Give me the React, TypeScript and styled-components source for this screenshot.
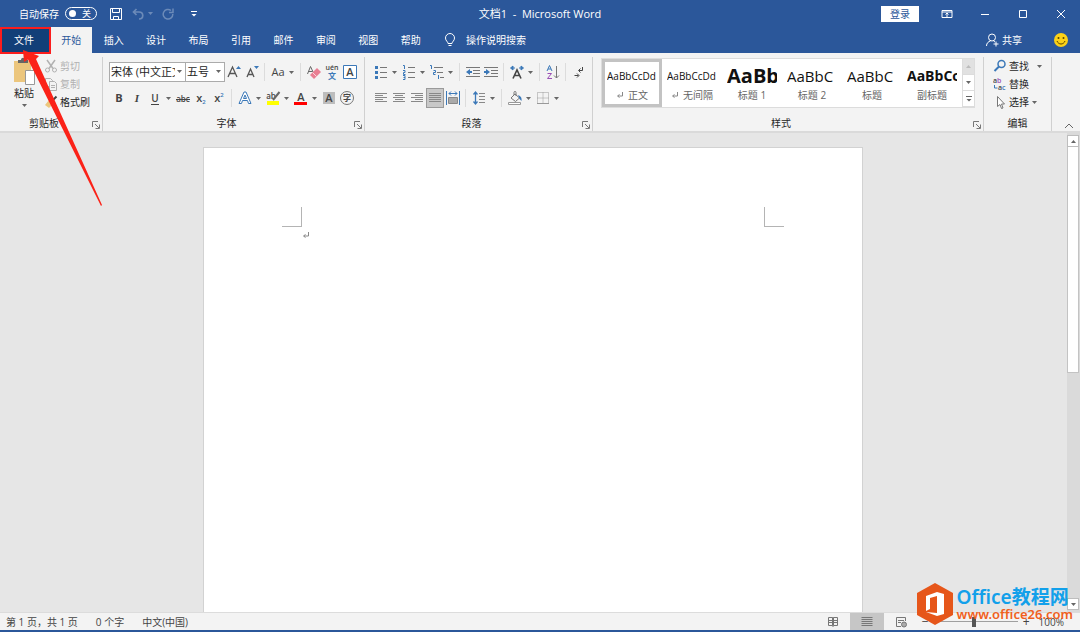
import React from "react";
import styled, { createGlobalStyle, css } from "styled-components";

const blue = "#2b579a";
const ink = "#444444";
const accent = "#3b78b8";

const GlobalStyle = createGlobalStyle`
  *, *::before, *::after { box-sizing: border-box; }
  body {
    margin: 0;
    font-family: "Open Sans", "Noto Sans CJK SC", sans-serif;
    font-size: 10px;
    line-height: 14px;
    color: #262626;
    background: #e6e6e6;
  }
  button, input, select { font: inherit; color: inherit; }
  button { border: 0; padding: 0; background: none; white-space: nowrap; }
  svg { display: block; flex: none; }
`;

const Window = styled.div`
  position: relative;
  display: flex;
  flex-direction: column;
  min-height: 100vh;
`;

/* ---------- title bar ---------- */

const TitleBar = styled.header`
  display: grid;
  grid-template-columns: 1fr auto 1fr;
  align-items: center;
  height: 27px;
  background: ${blue};
  color: #fff;
`;

const QuickAccess = styled.div`
  display: flex;
  align-items: center;
  padding-left: 19px;
`;

const AutoSave = styled.label`
  display: flex;
  align-items: center;
  gap: 6px;
  margin-right: 6px;
`;

const SwitchBox = styled.span`
  position: relative;
  display: flex;
  align-items: center;
  justify-content: space-between;
  width: 32px;
  height: 13px;
  padding: 0 5px 0 3px;
  border: 1px solid #fff;
  border-radius: 7px;
  line-height: 10px;
`;

const SwitchInput = styled.input`
  position: absolute;
  inset: 0;
  margin: 0;
  opacity: 0;
`;

const Knob = styled.span`
  width: 7px;
  height: 7px;
  border-radius: 50%;
  background: #fff;
`;

const SwitchState = styled.span`
  font-size: 9px;
`;

const QuickButton = styled.button<{ $dim?: boolean }>`
  display: flex;
  align-items: center;
  justify-content: center;
  width: 26px;
  height: 20px;
  gap: 4px;
  opacity: ${(p) => (p.$dim ? 0.3 : 1)};
`;

const WindowTitle = styled.h1`
  margin: 0;
  font-size: 11px;
  font-weight: 400;
  white-space: pre;
`;

const WindowControls = styled.div`
  display: flex;
  align-items: center;
  justify-content: flex-end;
`;

const SignIn = styled.button`
  width: 38px;
  height: 16px;
  margin-right: 9px;
  background: #fff;
  color: ${blue};
`;

const WindowButton = styled.button`
  display: flex;
  align-items: center;
  justify-content: center;
  width: 38px;
  height: 26px;
`;

/* ---------- tabs ---------- */

const TabBar = styled.nav`
  display: flex;
  height: 26px;
  background: ${blue};
  color: #fff;
`;

const FileTab = styled.button`
  width: 50px;
  padding-right: 2px;
  background: #123f78;
`;

const TabList = styled.div`
  display: grid;
  grid-template-columns: repeat(9, 1fr);
  width: 382px;
`;

const Tab = styled.button<{ $active?: boolean }>`
  ${(p) =>
    p.$active &&
    css`
      background: #f3f3f3;
      color: ${blue};
    `}
`;

const TellMe = styled.label`
  display: flex;
  align-items: center;
  flex: 1;
  gap: 10px;
  padding-left: 12px;
`;

const TellMeInput = styled.input`
  width: 120px;
  padding: 0;
  border: 0;
  outline: 0;
  background: none;
  &::placeholder { color: #fff; opacity: 1; }
`;

const TabActions = styled.div`
  display: flex;
  align-items: center;
  gap: 32px;
  padding-right: 12px;
`;

const ShareButton = styled.button`
  display: flex;
  align-items: center;
  gap: 3px;
`;

/* ---------- ribbon ---------- */

const Ribbon = styled.section`
  display: flex;
  height: 80px;
  padding-top: 4px;
  background: #f3f3f3;
  border-bottom: 2px solid #dadada;
`;

const Group = styled.div<{ $width?: number; $pad?: number }>`
  display: flex;
  flex-direction: column;
  justify-content: space-between;
  ${(p) => (p.$width ? `width: ${p.$width}px; flex: none;` : "flex: 1; min-width: 0;")}
  height: 74px;
  padding-left: ${(p) => p.$pad ?? 0}px;
  border-right: 1px solid #d0d0d0;
`;

const GroupFooter = styled.div<{ $pull?: number }>`
  display: flex;
  align-items: center;
  height: 16px;
  margin-left: -${(p) => p.$pull ?? 0}px;
`;

const GroupName = styled.span`
  flex: 1;
  text-align: center;
`;

const Launcher = styled.button`
  width: 14px;
  height: 12px;
  padding: 4px 0 0 4px;
`;

const ToolRows = styled.div`
  padding-top: 2px;
`;

const ToolRow = styled.div`
  display: flex;
  align-items: center;
  height: 26px;
`;

const ToolButton = styled.button<{ $pressed?: boolean; $split?: boolean }>`
  display: flex;
  align-items: center;
  justify-content: ${(p) => (p.$split ? "flex-start" : "center")};
  width: ${(p) => (p.$split ? 28 : 18)}px;
  height: 20px;
  gap: 3px;
  padding-left: ${(p) => (p.$split ? 1 : 0)}px;
  color: ${ink};
  ${(p) => p.$pressed && "background: #c8c8c8; box-shadow: inset 0 0 0 1px #9a9a9a;"}
`;

const Divider = styled.span`
  width: 1px;
  height: 18px;
  margin: 0 4px 0 3px;
  background: #dcdcdc;
`;

const Combo = styled.div<{ $width: number }>`
  position: relative;
  width: ${(p) => p.$width}px;
  height: 20px;
  margin-left: -1px;
`;

const ComboSelect = styled.select`
  appearance: none;
  width: 100%;
  height: 20px;
  padding: 0 10px 0 1px;
  border: 1px solid #ababab;
  border-radius: 0;
  background: #fff;
  font-size: 11px;
  overflow: hidden;
`;

const ComboArrow = styled.span`
  position: absolute;
  top: 8px;
  right: 4px;
  pointer-events: none;
`;

const ClipboardBody = styled.div`
  display: flex;
  gap: 9px;
  padding-left: 13px;
`;

const PasteButton = styled.button`
  display: flex;
  flex-direction: column;
  align-items: center;
  width: 22px;
  gap: 1px;
`;

const PasteArrow = styled.span`
  padding-top: 3px;
`;

const StackList = styled.div<{ $pad?: number }>`
  display: flex;
  flex-direction: column;
  padding-left: ${(p) => p.$pad ?? 0}px;
`;

const StackButton = styled.button<{ $disabled?: boolean }>`
  display: flex;
  align-items: center;
  height: 18px;
  gap: 2px;
  color: ${(p) => (p.$disabled ? "#b1b1b1" : "inherit")};
`;

const ArrowSlot = styled.span<{ $wide?: boolean }>`
  padding-left: ${(p) => (p.$wide ? 6 : 1)}px;
`;

/* ---------- style gallery ---------- */

const Gallery = styled.div`
  display: flex;
  height: 50px;
  margin: 1px 8px 0 0;
  border: 1px solid #dcdcdc;
  background: #fff;
`;

const GalleryItems = styled.div`
  display: grid;
  grid-template-columns: repeat(6, 1fr);
  flex: 1;
  min-width: 0;
`;

const StyleCard = styled.button<{ $active?: boolean }>`
  display: flex;
  flex-direction: column;
  align-items: center;
  justify-content: center;
  min-width: 0;
  padding: 0 2px;
  border: 3px solid ${(p) => (p.$active ? "#c3c3c3" : "transparent")};
`;

const Preview = styled.span<{ $size: number; $bold?: boolean }>`
  width: 50px;
  height: 24px;
  overflow: hidden;
  font-size: ${(p) => p.$size}px;
  font-weight: ${(p) => (p.$bold ? 700 : 400)};
  line-height: 24px;
  text-align: left;
  color: #111;
`;

const StyleName = styled.span`
  display: flex;
  align-items: center;
  gap: 4px;
  height: 14px;
  color: #666;
`;

const GalleryScroll = styled.div`
  display: grid;
  grid-template-rows: repeat(3, 1fr);
  width: 12px;
`;

const GalleryArrow = styled.button<{ $off?: boolean }>`
  display: flex;
  align-items: center;
  justify-content: center;
  border-left: 1px solid #dcdcdc;
  border-bottom: 1px solid #dcdcdc;
  background: ${(p) => (p.$off ? "#e1e1e1" : "#fff")};
`;

const CollapseButton = styled.button`
  display: flex;
  align-items: flex-end;
  justify-content: center;
  width: 28px;
  padding: 0 0 2px 6px;
`;

/* ---------- document ---------- */

const Workspace = styled.main`
  display: flex;
  flex: 1;
  background: #e6e6e6;
`;

const Canvas = styled.div`
  display: flex;
  flex: 1;
  justify-content: center;
  padding: 14px 1px 0 0;
`;

const Page = styled.article`
  width: 660px;
  padding: 59px 78px 0;
  border: 1px solid #d2d2d2;
  border-bottom: 0;
  background: #fff;
`;

const MarginMarks = styled.div`
  display: flex;
  justify-content: space-between;
`;

const Corner = styled.span<{ $side: "left" | "right" }>`
  width: 20px;
  height: 20px;
  border-bottom: 1px solid #b4b4b4;
  border-${(p) => (p.$side === "left" ? "right" : "left")}: 1px solid #b4b4b4;
`;

const Paragraph = styled.p`
  margin: 4px 20px;
`;

const Scrollbar = styled.div`
  display: flex;
  flex-direction: column;
  width: 13px;
  padding: 2px 1px 2px 0;
  background: #dadada;
`;

const ScrollButton = styled.button`
  display: flex;
  align-items: center;
  justify-content: center;
  height: 12px;
  border: 1px solid #bdbdbd;
  background: #fff;
`;

const ScrollTrack = styled.div`
  flex: 1;
`;

const ScrollThumb = styled.div`
  height: 50%;
  border: 1px solid #c3c3c3;
  border-top: 0;
  background: #fff;
`;

/* ---------- status bar ---------- */

const StatusBar = styled.footer`
  display: flex;
  align-items: stretch;
  justify-content: space-between;
  height: 20px;
  border-top: 1px solid #dcdcdc;
  border-bottom: 2px solid ${blue};
  background: #f3f3f3;
  color: ${ink};
`;

const StatusInfo = styled.div`
  display: flex;
  align-items: center;
  gap: 18px;
  padding-left: 6px;
  white-space: pre;
`;

const StatusTools = styled.div`
  display: flex;
  align-items: stretch;
  padding-right: 16px;
`;

const ViewButton = styled.button<{ $active?: boolean }>`
  display: flex;
  align-items: center;
  justify-content: center;
  width: 34px;
  background: ${(p) => (p.$active ? "#c6c6c6" : "transparent")};
`;

const Zoom = styled.div`
  display: flex;
  align-items: center;
  gap: 4px;
  padding-left: 3px;
`;

const ZoomStep = styled.button`
  width: 9px;
  font-size: 12px;
  line-height: 14px;
`;

const ZoomSlider = styled.input`
  appearance: none;
  width: 84px;
  height: 12px;
  margin: 0;
  background: linear-gradient(#a0a0a0, #a0a0a0) center / 100% 1px no-repeat;
  &::-webkit-slider-thumb {
    appearance: none;
    width: 4px;
    height: 10px;
    background: #555;
  }
`;

const ZoomValue = styled.span`
  padding-left: 4px;
`;

/* ---------- overlays ---------- */

const FileHighlight = styled.div`
  position: absolute;
  top: 27px;
  left: 0;
  width: 51px;
  height: 27px;
  border: 2px solid #fb1d1d;
  pointer-events: none;
`;

const PointerArrow = styled.svg`
  position: absolute;
  top: 50px;
  left: 20px;
  pointer-events: none;
`;

const Watermark = styled.aside`
  position: absolute;
  right: 7px;
  bottom: 7px;
  display: flex;
  align-items: center;
  gap: 4px;
`;

const WatermarkText = styled.div`
  display: flex;
  flex-direction: column;
  font-family: "Noto Sans", "Noto Sans CJK SC", sans-serif;
`;

const WatermarkName = styled.strong`
  font-size: 19px;
  font-weight: 600;
  line-height: 20px;
  color: #12a0ea;
`;

const WatermarkUrl = styled.a`
  font-size: 13px;
  font-weight: 600;
  line-height: 14px;
  color: #f0601c;
  text-decoration: none;
`;

/* ---------- icons ---------- */

type IconProps = { children: React.ReactNode; w?: number; h?: number; c?: string };

const Icon = ({ children, w = 16, h = 16, c = ink }: IconProps) => (
  <svg width={w} height={h} viewBox={`0 0 ${w} ${h}`} fill="none" stroke={c} aria-hidden="true">
    {children}
  </svg>
);

const Caret = ({ c = "#666", up = false }: { c?: string; up?: boolean }) => (
  <svg width="5" height="3" viewBox="0 0 5 3" aria-hidden="true">
    <path d={up ? "M0 3h5L2.5 0z" : "M0 0h5L2.5 3z"} fill={c} />
  </svg>
);

const LauncherIcon = () => (
  <Icon w={8} h={8} c="#777">
    <path d="M.5 6V.5H6M3 3l4 4M7.500 3.500v4h-4" />
  </Icon>
);

const Lines = ({ rows }: { rows: [number, number][] }) => (
  <Icon w={14} h={14} c="#888">
    {rows.map(([a, b], i) => (
      <path key={i} d={`M${a} ${2.5 + i * 2}H${b}`} />
    ))}
  </Icon>
);

const glyph = { stroke: "none", fontFamily: '"Open Sans","Noto Sans CJK SC",sans-serif' };

const BulletsIcon = () => (
  <Icon>
    <path d="M7 3.500h7M7 8.500h7M7 13.500h7" stroke="#777" />
    <path d="M2 2h3v3H2zM2 7h3v3H2zM2 12h3v3H2z" fill={accent} stroke="none" />
  </Icon>
);

const NumberingIcon = () => (
  <Icon>
    <path d="M7 3.500h7M7 8.500h7M7 13.500h7" stroke="#777" />
    <path d="M2 1.500h1.500V5M2 6.500h2v2H2.500v2H4.500M2 11.500h2v4H2M2.500 13.500H4" stroke={accent} />
  </Icon>
);

const MultilevelIcon = () => (
  <Icon>
    <path d="M5 3.500h9M8 8.500h6M11 13.500h4" stroke="#777" />
    <path d="M1 1.500h1.500V5M4.500 6.500h2v2h-2v2h2M9.500 11v4" stroke={accent} />
  </Icon>
);

const IndentIcon = ({ out = false }: { out?: boolean }) => (
  <Icon>
    <path d="M1 3.500h14M8 6.500h7M8 9.500h7M1 12.500h14" stroke="#777" />
    {out ? (
      <path d="M1 8l4-3v2h2v2H5v2z" fill={accent} stroke="none" />
    ) : (
      <path d="M7 8L3 5v2H1v2h2v2z" fill={accent} stroke="none" />
    )}
  </Icon>
);

const AsianLayoutIcon = () => (
  <Icon>
    <path d="M4 14.500L8 6l4 8.500M5.500 11.500h5" strokeWidth="1.6" />
    <path d="M1.500 4l2.500-2v4zM14.500 4l-2.500-2v4z" fill={accent} stroke={accent} />
    <path d="M4 4h2M10 4h2" stroke={accent} />
  </Icon>
);

const SortIcon = () => (
  <Icon>
    <path d="M2 7l2.500-5.500L7 7M3 5h3" stroke={accent} />
    <path d="M2.500 9.500h4l-4 5h4.500" stroke="#9a4fb5" />
    <path d="M11.500 2v12M9 11.500l2.500 2.500 2.500-2.500" stroke="#777" />
  </Icon>
);

const MarksIcon = () => (
  <Icon>
    <path d="M11.500 3v3.500H8M9.500 4.500l-2 2 2 2M3.500 11.500h4M6 9.500l2 2-2 2" />
  </Icon>
);

const DistributeIcon = () => (
  <Icon>
    <path d="M1.500 1v14M14.500 1v14M4 3.500h8M6 1.500l-2 2 2 2M10 1.500l2 2-2 2" stroke={accent} />
    <path d="M3.500 7.500h9v6h-9z" fill="#aaa" stroke="#888" />
  </Icon>
);

const SpacingIcon = () => (
  <Icon>
    <path d="M4.500 2v12M2.500 4.500l2-2.500 2 2.500M2.500 11.500l2 2.500 2-2.500" stroke={accent} strokeWidth="1.3" />
    <path d="M8 3.500h6M8 6.500h6M8 9.500h6M8 12.500h6" stroke="#888" />
  </Icon>
);

const ShadingIcon = () => (
  <Icon>
    <path d="M4 8l4-4 4.500 4-4 3.500zM7 5V2.500C7 1 9 1 9 2.500V6" stroke="#777" />
    <path d="M11 5c3 1 4 3 3.500 6l-2-2z" fill={accent} stroke="none" />
    <path d="M1.500 12.500h12v2h-12z" fill="#fff" stroke="#999" />
  </Icon>
);

const BordersIcon = () => (
  <Icon c="#999">
    <path d="M2.500 2.500h11v11h-11zM8 2.500v11M2.500 8h11" strokeDasharray="1 1" />
    <path d="M2 13.500h12" stroke="#999" />
  </Icon>
);

const TextIcon = ({ children, size = 11, weight = 600, extra }: { children: React.ReactNode; size?: number; weight?: number; extra?: React.ReactNode }) => (
  <svg width="16" height="16" viewBox="0 0 16 16" aria-hidden="true">
    {extra}
    <text x="8" y="12" textAnchor="middle" fontSize={size} fontWeight={weight} fill={ink} style={glyph}>
      {children}
    </text>
  </svg>
);

const GrowIcon = ({ shrink = false }: { shrink?: boolean }) => (
  <Icon>
    <path d={shrink ? "M3 13l3.500-8L10 13M4.500 10.500h4" : "M2 13L6.500 3 11 13M3.500 9.500h6"} stroke="#555" strokeWidth="1.3" />
    <path d={shrink ? "M10 2h5l-2.500 3z" : "M10 5h5l-2.500-3z"} fill={accent} stroke="none" />
  </Icon>
);

const EraserIcon = () => (
  <Icon>
    <path d="M1.500 10L4.500 2.500 8 10M2.500 7.500h4" stroke="#666" />
    <path d="M4 11l7-7 4 4-7 7z" fill="#e97f93" stroke="none" />
    <path d="M6.500 8.500l4 4" stroke="#fbd5dc" />
  </Icon>
);

const PhoneticIcon = () => (
  <svg width="16" height="20" viewBox="0 0 16 20" aria-hidden="true">
    <text x="8" y="8" textAnchor="middle" fontSize="7" fontWeight="600" fill={ink} style={glyph}>uén</text>
    <text x="8" y="17" textAnchor="middle" fontSize="8" fontWeight="700" fill={accent} style={glyph}>文</text>
  </svg>
);

const PasteIcon = () => (
  <Icon w={22} h={28}>
    <path d="M1 4h17v21H1z" fill="#ecc67d" stroke="none" />
    <path d="M5 3h3c0-3 4-3 4 0h3v3H5z" fill="#666" stroke="none" />
    <path d="M12.500 13.500h9v14h-9z" fill="#fff" stroke="#999" />
  </Icon>
);

const CutIcon = () => (
  <Icon w={14} h={14} c="#b1b1b1">
    <path d="M3 1l6 8.500M11 1L5 9.500" strokeWidth="1.5" />
    <circle cx="3.500" cy="11" r="2" />
    <circle cx="10.500" cy="11" r="2" />
  </Icon>
);

const CopyIcon = () => (
  <Icon w={14} h={14} c="#b1b1b1">
    <path d="M1.500 1.500h5l2 2v6h-7z" />
    <path d="M5.500 4.500h5l2 2v7h-7zM7 8.500h4M7 10.500h4" fill="#f3f3f3" />
  </Icon>
);

const BrushIcon = () => (
  <Icon w={14} h={14}>
    <path d="M12.500 1.500L9 5" strokeWidth="2" />
    <path d="M6 3l5 5-2 1-4-4z" fill="#555" stroke="none" />
    <path d="M5 5l4 4-4 4-4-3z" fill="#ecc67d" stroke="none" />
  </Icon>
);

const ReturnMark = ({ c = "#888" }: { c?: string }) => (
  <Icon w={8} h={8} c={c}>
    <path d="M6.500 1v4H2M3.500 3.500L1.500 5l2 1.500" />
  </Icon>
);

/* ---------- data ---------- */

const tabs = ["开始", "插入", "设计", "布局", "引用", "邮件", "审阅", "视图", "帮助"];

const styleCards = [
  { sample: "AaBbCcDd", name: "正文", size: 10, mark: true, active: true },
  { sample: "AaBbCcDd", name: "无间隔", size: 10, mark: true },
  { sample: "AaBb", name: "标题 1", size: 20, bold: true },
  { sample: "AaBbC", name: "标题 2", size: 15 },
  { sample: "AaBbC", name: "标题", size: 15 },
  { sample: "AaBbCc", name: "副标题", size: 14, bold: true },
];

const Split = ({ label, children }: { label: string; children: React.ReactNode }) => (
  <ToolButton $split aria-label={label}>
    {children}
    <Caret />
  </ToolButton>
);

const Footer = ({ name, launcher = true, pull }: { name: string; launcher?: boolean; pull?: number }) => (
  <GroupFooter $pull={pull}>
    <GroupName>{name}</GroupName>
    {launcher && (
      <Launcher aria-label={`${name}选项`}>
        <LauncherIcon />
      </Launcher>
    )}
  </GroupFooter>
);

export default function App() {
  return (
    <Window>
      <GlobalStyle />

      <TitleBar>
        <QuickAccess>
          <AutoSave>
            自动保存
            <SwitchBox>
              <SwitchInput type="checkbox" role="switch" />
              <Knob />
              <SwitchState>关</SwitchState>
            </SwitchBox>
          </AutoSave>
          <QuickButton aria-label="保存">
            <Icon w={14} h={14} c="#fff">
              <path d="M1.500 1.500h11v11h-11z" />
              <path d="M3.500 1.500v4h7v-4M4.500 12.500V9.500h5v3" />
            </Icon>
          </QuickButton>
          <QuickButton aria-label="撤消" $dim>
            <Icon w={12} h={12} c="#fff">
              <path d="M4.500 1L1.500 4l3 3M2 4h5c5 0 5 7 0 7" strokeWidth="1.7" />
            </Icon>
            <Caret c="#fff" />
          </QuickButton>
          <QuickButton aria-label="重复" $dim>
            <Icon w={12} h={12} c="#fff">
              <path d="M9 2.500A4.800 4.800 0 1 0 10.800 6M7 4.500h4V.5" strokeWidth="1.5" />
            </Icon>
          </QuickButton>
          <QuickButton aria-label="自定义快速访问工具栏">
            <Icon w={6} h={6} c="#fff">
              <path d="M0 .5h6" />
              <path d="M.5 3h5L3 5.500z" fill="#fff" stroke="none" />
            </Icon>
          </QuickButton>
        </QuickAccess>
        <WindowTitle>{"文档1  -  Microsoft Word"}</WindowTitle>
        <WindowControls>
          <SignIn>登录</SignIn>
          <WindowButton aria-label="功能区显示选项">
            <Icon w={12} h={10} c="#fff">
              <path d="M1 1.500h10v7H1zM1 3h10M6 8V4M4.500 5.500L6 4l1.500 1.500" />
            </Icon>
          </WindowButton>
          <WindowButton aria-label="最小化">
            <Icon w={10} h={10} c="#fff"><path d="M1 5.500h8" /></Icon>
          </WindowButton>
          <WindowButton aria-label="最大化">
            <Icon w={10} h={10} c="#fff"><path d="M1.500 1.500h7v7h-7z" /></Icon>
          </WindowButton>
          <WindowButton aria-label="关闭">
            <Icon w={10} h={10} c="#fff"><path d="M1 1l8 8M9 1L1 9" /></Icon>
          </WindowButton>
        </WindowControls>
      </TitleBar>

      <TabBar>
        <FileTab>文件</FileTab>
        <TabList>
          {tabs.map((t, i) => (
            <Tab key={t} $active={i === 0}>{t}</Tab>
          ))}
        </TabList>
        <TellMe>
          <Icon w={12} h={14} c="#fff">
            <path d="M4 10.500C4 8.500 1.500 8 1.500 5a4.500 4.500 0 0 1 9 0c0 3-2.500 3.500-2.500 5.500zM4.500 12.500h3" />
          </Icon>
          <TellMeInput placeholder="操作说明搜索" aria-label="操作说明搜索" />
        </TellMe>
        <TabActions>
          <ShareButton>
            <Icon w={13} h={14} c="#fff">
              <circle cx="6" cy="4.500" r="3.500" />
              <path d="M.5 13c0-3 2-4.500 4-5M7.500 8l1.500 1M10 8.500v5M7.500 11h5" />
            </Icon>
            共享
          </ShareButton>
          <button aria-label="反馈">
            <svg width="14" height="14" viewBox="0 0 14 14" aria-hidden="true">
              <circle cx="7" cy="7" r="7" fill="#fcd116" />
              <circle cx="4.500" cy="5" r="1" fill="#5a4500" />
              <circle cx="9.500" cy="5" r="1" fill="#5a4500" />
              <path d="M3 8c1.500 4 6.500 4 8 0" fill="none" stroke="#5a4500" />
            </svg>
          </button>
        </TabActions>
      </TabBar>

      <Ribbon>
        <Group $width={103}>
          <ClipboardBody>
            <PasteButton>
              <PasteIcon />
              粘贴
              <PasteArrow><Caret /></PasteArrow>
            </PasteButton>
            <StackList>
              <StackButton $disabled><CutIcon />剪切</StackButton>
              <StackButton $disabled><CopyIcon />复制</StackButton>
              <StackButton><BrushIcon />格式刷</StackButton>
            </StackList>
          </ClipboardBody>
          <Footer name="剪贴板" />
        </Group>

        <Group $width={262} $pad={7}>
          <ToolRows>
            <ToolRow>
              <Combo $width={77}>
                <ComboSelect aria-label="字体" defaultValue="a">
                  <option value="a">宋体 (中文正文)</option>
                </ComboSelect>
                <ComboArrow><Caret /></ComboArrow>
              </Combo>
              <Combo $width={40}>
                <ComboSelect aria-label="字号" defaultValue="a">
                  <option value="a">五号</option>
                </ComboSelect>
                <ComboArrow><Caret /></ComboArrow>
              </Combo>
              <ToolButton aria-label="增大字号"><GrowIcon /></ToolButton>
              <ToolButton aria-label="减小字号"><GrowIcon shrink /></ToolButton>
              <Divider />
              <Split label="更改大小写"><TextIcon weight={400}>Aa</TextIcon></Split>
              <Divider />
              <ToolButton aria-label="清除格式"><EraserIcon /></ToolButton>
              <ToolButton aria-label="拼音指南"><PhoneticIcon /></ToolButton>
              <ToolButton aria-label="字符边框">
                <TextIcon extra={<path d="M1.500 1.500h13v13h-13z" fill="#fff" stroke={accent} />}>A</TextIcon>
              </ToolButton>
            </ToolRow>
            <ToolRow>
              <ToolButton aria-label="加粗"><TextIcon weight={700}>B</TextIcon></ToolButton>
              <ToolButton aria-label="倾斜">
                <TextIcon><tspan fontStyle="italic" fontFamily="Liberation Serif">I</tspan></TextIcon>
              </ToolButton>
              <Split label="下划线">
                <TextIcon size={10} extra={<path d="M4 14.500h8" stroke={ink} />}>U</TextIcon>
              </Split>
              <ToolButton aria-label="删除线">
                <TextIcon size={8} extra={<path d="M1 9.500h14" stroke={ink} />}>abc</TextIcon>
              </ToolButton>
              <ToolButton aria-label="下标">
                <TextIcon>x<tspan fontSize="6" dy="2" fill={accent}>2</tspan></TextIcon>
              </ToolButton>
              <ToolButton aria-label="上标">
                <TextIcon>x<tspan fontSize="6" dy="-5" fill={accent}>2</tspan></TextIcon>
              </ToolButton>
              <Divider />
              <Split label="文本效果">
                <Icon>
                  <path d="M2 13.500L7 2h2l5 11.500h-2.500l-1-3h-5l-1 3zM6.500 8.500h3L8 5z" stroke={accent} fill="#fff" />
                </Icon>
              </Split>
              <Split label="突出显示">
                <svg width="16" height="16" viewBox="0 0 16 16" aria-hidden="true">
                  <path d="M2 11h12v4H2z" fill="#ffff00" />
                  <text x="6" y="9" textAnchor="middle" fontSize="8" fontWeight="600" fill={ink} style={glyph}>ab</text>
                  <path d="M14.500 2L8 10" stroke="#666" strokeWidth="2" />
                </svg>
              </Split>
              <Split label="字体颜色">
                <svg width="16" height="16" viewBox="0 0 16 16" aria-hidden="true">
                  <path d="M1 12h13v3H1z" fill="#ff0000" />
                  <text x="8" y="11" textAnchor="middle" fontSize="11" fontWeight="600" fill={ink} style={glyph}>A</text>
                </svg>
              </Split>
              <ToolButton aria-label="字符底纹">
                <TextIcon extra={<path d="M2 2h12v12H2z" fill="#bdbdbd" />}>A</TextIcon>
              </ToolButton>
              <ToolButton aria-label="带圈字符">
                <TextIcon size={8} extra={<circle cx="8" cy="8" r="6.500" fill="none" stroke="#777" />}>
                  <tspan dy="-1">字</tspan>
                </TextIcon>
              </ToolButton>
            </ToolRow>
          </ToolRows>
          <Footer name="字体" pull={7} />
        </Group>

        <Group $width={228} $pad={7}>
          <ToolRows>
            <ToolRow>
              <Split label="项目符号"><BulletsIcon /></Split>
              <Split label="编号"><NumberingIcon /></Split>
              <Split label="多级列表"><MultilevelIcon /></Split>
              <Divider />
              <ToolButton aria-label="减少缩进量"><IndentIcon out /></ToolButton>
              <ToolButton aria-label="增加缩进量"><IndentIcon /></ToolButton>
              <Divider />
              <Split label="中文版式"><AsianLayoutIcon /></Split>
              <Divider />
              <ToolButton aria-label="排序"><SortIcon /></ToolButton>
              <Divider />
              <ToolButton aria-label="显示编辑标记"><MarksIcon /></ToolButton>
            </ToolRow>
            <ToolRow>
              <ToolButton aria-label="左对齐">
                <Lines rows={[[1, 13], [1, 9], [1, 13], [1, 9], [1, 13]]} />
              </ToolButton>
              <ToolButton aria-label="居中">
                <Lines rows={[[1, 13], [3, 11], [1, 13], [3, 11], [1, 13]]} />
              </ToolButton>
              <ToolButton aria-label="右对齐">
                <Lines rows={[[1, 13], [5, 13], [1, 13], [5, 13], [1, 13]]} />
              </ToolButton>
              <ToolButton aria-label="两端对齐" $pressed>
                <Lines rows={[[1, 13], [1, 13], [1, 13], [1, 13], [1, 13]]} />
              </ToolButton>
              <ToolButton aria-label="分散对齐"><DistributeIcon /></ToolButton>
              <Divider />
              <Split label="行距"><SpacingIcon /></Split>
              <Divider />
              <Split label="底纹"><ShadingIcon /></Split>
              <Split label="边框"><BordersIcon /></Split>
            </ToolRow>
          </ToolRows>
          <Footer name="段落" pull={7} />
        </Group>

        <Group $pad={8}>
          <Gallery>
            <GalleryItems>
              {styleCards.map((s) => (
                <StyleCard key={s.name} $active={s.active}>
                  <Preview $size={s.size} $bold={s.bold}>{s.sample}</Preview>
                  <StyleName>
                    {s.mark && <ReturnMark />}
                    {s.name}
                  </StyleName>
                </StyleCard>
              ))}
            </GalleryItems>
            <GalleryScroll>
              <GalleryArrow $off aria-label="上一行"><Caret c="#bbb" up /></GalleryArrow>
              <GalleryArrow aria-label="下一行"><Caret /></GalleryArrow>
              <GalleryArrow aria-label="其他样式">
                <Icon w={6} h={6} c="#666">
                  <path d="M0 .5h6" />
                  <path d="M.5 3h5L3 5.500z" fill="#666" stroke="none" />
                </Icon>
              </GalleryArrow>
            </GalleryScroll>
          </Gallery>
          <Footer name="样式" pull={8} />
        </Group>

        <Group $width={68}>
          <StackList $pad={9}>
            <StackButton>
              <Icon w={14} h={14} c={accent}>
                <circle cx="8.500" cy="5" r="3.500" strokeWidth="1.5" />
                <path d="M6 7.500L1.500 12" strokeWidth="2" />
              </Icon>
              查找
              <ArrowSlot $wide><Caret /></ArrowSlot>
            </StackButton>
            <StackButton>
              <svg width="14" height="18" viewBox="0 0 14 18" aria-hidden="true">
                <text x="0" y="8" fontSize="7" fontWeight="600" fill={ink} style={glyph}>a<tspan fill="#9a4fb5">b</tspan></text>
                <text x="5" y="15" fontSize="7" fontWeight="600" fill={ink} style={glyph}>a<tspan fill={accent}>c</tspan></text>
                <path d="M1.500 10v3h3" fill="none" stroke={accent} />
              </svg>
              替换
            </StackButton>
            <StackButton>
              <Icon w={14} h={14} c="#777">
                <path d="M4.500 1.500v10l2.500-2 1.500 4 1.500-.5-1.500-4h3z" fill="#fff" />
              </Icon>
              选择
              <ArrowSlot><Caret /></ArrowSlot>
            </StackButton>
          </StackList>
          <Footer name="编辑" launcher={false} />
        </Group>
        <CollapseButton aria-label="折叠功能区">
          <Icon w={10} h={6} c="#666"><path d="M1 5l4-4 4 4" /></Icon>
        </CollapseButton>
      </Ribbon>

      <Workspace>
        <Canvas>
          <Page>
            <MarginMarks>
              <Corner $side="left" />
              <Corner $side="right" />
            </MarginMarks>
            <Paragraph><ReturnMark /></Paragraph>
          </Page>
        </Canvas>
        <Scrollbar>
          <ScrollButton aria-label="向上滚动"><Caret up /></ScrollButton>
          <ScrollTrack><ScrollThumb /></ScrollTrack>
          <ScrollButton aria-label="向下滚动"><Caret /></ScrollButton>
        </Scrollbar>
      </Workspace>

      <StatusBar>
        <StatusInfo>
          <span>第 1 页，共 1 页</span>
          <span>0 个字</span>
          <span>中文(中国)</span>
        </StatusInfo>
        <StatusTools>
          <ViewButton aria-label="阅读视图">
            <Icon w={12} h={12} c="#777">
              <path d="M1.500 1.500h4v8h-4zM6.500 1.500h4v8h-4zM6 1v10M2 4.500h3M2 6.500h3M7 4.500h3M7 6.500h3" />
            </Icon>
          </ViewButton>
          <ViewButton aria-label="页面视图" $active>
            <Icon w={12} h={12} c="#777">
              <path d="M.5 1.500h11M.5 3.500h11M.5 5.500h11M.5 7.500h11M.5 9.500h11" />
            </Icon>
          </ViewButton>
          <ViewButton aria-label="Web 版式视图">
            <Icon w={12} h={12} c="#777">
              <path d="M6 10.500H1.500v-9h9V5M3 4.500h6M3 6.500h3" />
              <circle cx="9" cy="8.500" r="2.500" fill="#aaa" />
            </Icon>
          </ViewButton>
          <Zoom>
            <ZoomStep aria-label="缩小">−</ZoomStep>
            <ZoomSlider type="range" min="0" max="100" defaultValue="48" aria-label="显示比例" />
            <ZoomStep aria-label="放大">+</ZoomStep>
            <ZoomValue>100%</ZoomValue>
          </Zoom>
        </StatusTools>
      </StatusBar>

      <FileHighlight />
      <PointerArrow width="84" height="158" viewBox="0 0 84 158" aria-hidden="true">
        <path d="M3 0L19 6l-3 3L82 155l-1 1L8 9.500 4 12z" fill="#fb2218" />
      </PointerArrow>
      <Watermark>
        <svg width="36" height="42" viewBox="0 0 36 42" aria-hidden="true">
          <path d="M18 0l18 10v22L18 42 0 32V10z" fill="#e6561a" />
          <path d="M9 13l11-4 7 2v20l-7 2-11-4 11 1V13l-7 2v11l-4 2z" fill="#fff" />
        </svg>
        <WatermarkText>
          <WatermarkName>Office教程网</WatermarkName>
          <WatermarkUrl href="#">www.office26.com</WatermarkUrl>
        </WatermarkText>
      </Watermark>
    </Window>
  );
}
